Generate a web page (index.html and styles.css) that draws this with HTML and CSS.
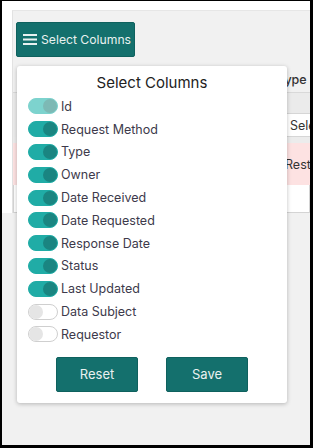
FILE: index.html
```html
<!DOCTYPE html>
<html>
<head>
    <title>Requests</title>
    <link rel="stylesheet" href="styles.css">
</head>
<body>
    <div class="frame">
        <div class="wrap">
            <div class="panel">
                <!-- Toolbar -->
                <div class="toolbar">
                    <button type="button" class="btn btn-columns">
                        <svg class="burger" width="14" height="11" viewBox="0 0 14 11">
                            <rect x="0" y="0" width="14" height="2" fill="currentColor"/>
                            <rect x="0" y="4.5" width="14" height="2" fill="currentColor"/>
                            <rect x="0" y="9" width="14" height="2" fill="currentColor"/>
                        </svg>
                        Select Columns
                    </button>
                </div>

                <!-- Table behind the popup -->
                <div class="table">
                    <div class="row head">
                        <div class="cell"></div>
                        <div class="cell">Type</div>
                    </div>
                    <div class="row filter">
                        <div class="cell"></div>
                        <div class="cell"><div class="select">Select</div></div>
                    </div>
                    <div class="row gap"></div>
                    <div class="row warn">
                        <div class="cell"></div>
                        <div class="cell">Restricted</div>
                    </div>
                    <div class="row plain">
                        <div class="cell"></div>
                        <div class="cell"></div>
                    </div>
                </div>
            </div>
        </div>

        <!-- Column picker popup -->
        <div class="picker">
            <h3 class="picker-title">Select Columns</h3>
            <ul class="col-list">
                <li><span class="toggle on disabled"></span>Id</li>
                <li><span class="toggle on"></span>Request Method</li>
                <li><span class="toggle on"></span>Type</li>
                <li><span class="toggle on"></span>Owner</li>
                <li><span class="toggle on"></span>Date Received</li>
                <li><span class="toggle on"></span>Date Requested</li>
                <li><span class="toggle on"></span>Response Date</li>
                <li><span class="toggle on"></span>Status</li>
                <li><span class="toggle on"></span>Last Updated</li>
                <li><span class="toggle"></span>Data Subject</li>
                <li><span class="toggle"></span>Requestor</li>
            </ul>
            <div class="picker-actions">
                <button type="button" class="btn btn-action">Reset</button>
                <button type="button" class="btn btn-action">Save</button>
            </div>
        </div>
    </div>
</body>
</html>
```

FILE: styles.css
```css
* {
    box-sizing: border-box;
}
html, body {
    margin: 0;
    height: 448px;
}
body {
    font-family: Inter, "DejaVu Sans", sans-serif;
    color: #3d3a4b;
}
.frame {
    position: relative;
    height: 448px;
    border-style: solid;
    border-color: #000;
    border-width: 1px 3px 3px 2px;
    background: #f1f1f1;
    overflow: hidden;
}
.wrap {
    background: #fff;
    padding: 9px 0 0 10px;
}
.panel {
    background: #f1f1f1;
    border-left: 1px solid #e2e2e2;
    border-top: 1px solid #e6e6e6;
}
.toolbar {
    padding: 11px 0 9px 3px;
}
.btn {
    border: 1px solid #0f615e;
    border-radius: 2px;
    background: #14706d;
    color: #e9f1f0;
    font-family: inherit;
    cursor: pointer;
}
.btn-columns {
    display: flex;
    align-items: center;
    gap: 4px;
    height: 35px;
    width: 119px;
    padding: 0 0 0 6px;
    font-size: 12.2px;
}
.burger {
    display: block;
}

/* table behind */
.table {
    font-size: 12.5px;
    color: #333;
}
.row {
    display: grid;
    grid-template-columns: 258px 1fr;
}
.cell {
    padding: 0 6px;
    display: flex;
    align-items: center;
    white-space: nowrap;
    overflow: hidden;
}
.head {
    height: 27px;
    border-bottom: 1px solid #d9d9d9;
}
.head .cell {
    font-weight: 500;
}
.filter {
    height: 44px;
    background: #ebebeb;
    align-items: end;
}
.filter .cell {
    padding: 0;
}
.select {
    width: 100%;
    height: 24px;
    background: #fff;
    border-top: 1px solid #d6d6d6;
    border-bottom: 1px solid #d6d6d6;
    padding-left: 19px;
    display: flex;
    align-items: center;
}
.gap {
    height: 6px;
    background: #ececec;
}
.warn {
    height: 42px;
    background: #fde2e2;
}
.warn .cell {
    padding-left: 14px;
}
.plain {
    height: 28px;
    background: #fff;
    border: 1px solid #d4d4d4;
    border-top: none;
}

/* popup */
.picker {
    position: absolute;
    left: 15px;
    top: 65px;
    width: 270px;
    height: 337px;
    background: #fff;
    border-radius: 3px;
    box-shadow: 0 1px 4px rgba(0, 0, 0, 0.25);
    padding: 6px 11px 11px;
}
.picker-title {
    margin: 0;
    height: 22px;
    line-height: 22px;
    text-align: center;
    font-size: 15px;
    font-weight: 400;
    color: #222;
}
.col-list {
    list-style: none;
    margin: 1px 0 0;
    padding: 0;
}
.col-list li {
    display: flex;
    align-items: center;
    gap: 3px;
    height: 22.8px;
    font-size: 12.5px;
}
.toggle {
    position: relative;
    width: 30px;
    height: 16px;
    border-radius: 8px;
    background: #fff;
    border: 1px solid #cfcfcf;
    flex: none;
}
.toggle::after {
    content: "";
    position: absolute;
    top: 0;
    left: 0;
    width: 14px;
    height: 14px;
    border-radius: 50%;
    background: #e5e5e5;
}
.toggle.on {
    background: #20aca6;
    border-color: #20aca6;
}
.toggle.on::after {
    left: auto;
    right: 0;
    background: #1a8581;
}
.toggle.on.disabled {
    background: #7dd3ce;
    border-color: #7dd3ce;
}
.toggle.on.disabled::after {
    background: #7db9b5;
}
.picker-actions {
    display: flex;
    justify-content: center;
    gap: 28px;
    margin-top: 11px;
}
.btn-action {
    width: 82px;
    height: 35px;
    font-size: 13px;
}
```
